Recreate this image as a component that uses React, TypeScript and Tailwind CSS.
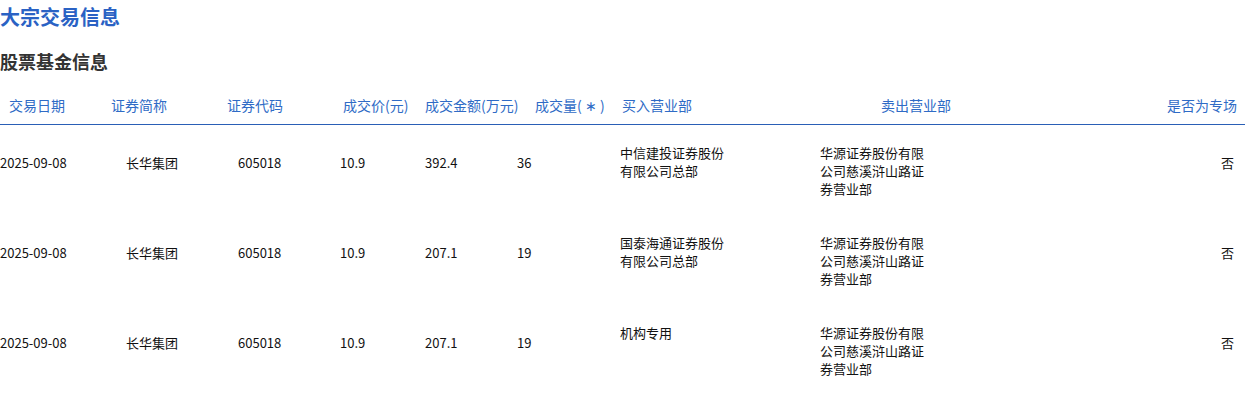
import React from "react";

const font = { fontFamily: '"Noto Sans CJK SC", "Noto Sans", sans-serif' };

type Row = { date: string; name: string; code: string; price: string; amount: string; vol: string; buy: string; sell: string; special: string };

const rows: Row[] = [
  { date: "2025-09-08", name: "长华集团", code: "605018", price: "10.9", amount: "392.4", vol: "36", buy: "中信建投证券股份有限公司总部", sell: "华源证券股份有限公司慈溪浒山路证券营业部", special: "否" },
  { date: "2025-09-08", name: "长华集团", code: "605018", price: "10.9", amount: "207.1", vol: "19", buy: "国泰海通证券股份有限公司总部", sell: "华源证券股份有限公司慈溪浒山路证券营业部", special: "否" },
  { date: "2025-09-08", name: "长华集团", code: "605018", price: "10.9", amount: "207.1", vol: "19", buy: "机构专用", sell: "华源证券股份有限公司慈溪浒山路证券营业部", special: "否" },
];

const cols = "grid grid-cols-[90px_110px_100px_120px_90px_105px_200px_200px_1fr]";

export default function App() {
  return (
    <div className="bg-white w-[1245px] h-[394px] overflow-hidden text-[#222]" style={font}>
      <h1 className="text-[20px] leading-[26px] font-bold text-[#2a62c4] pt-[4px]">大宗交易信息</h1>
      <h2 className="text-[18px] leading-[24px] font-bold text-[#333] mt-[19px]">股票基金信息</h2>
      <div className={`${cols} mt-[22px] h-[30px] border-b border-[#2a5fb6] text-[14px] leading-[20px] text-[#2f6bc6] items-start whitespace-nowrap`}>
        <div className="pl-[9px]">交易日期</div>
        <div className="pl-[21px]">证券简称</div>
        <div className="pl-[27px]">证券代码</div>
        <div className="pl-[43px]">成交价(元)</div>
        <div className="pl-[5px]">成交金额(万元)</div>
        <div className="pl-[25px]">成交量( ∗ )</div>
        <div className="pl-[7px]">买入营业部</div>
        <div className="pl-[66px]">卖出营业部</div>
        <div className="text-right pr-[8px]">是否为专场</div>
      </div>
      {rows.map((r, i) => (
        <div key={i} className={`${cols} h-[90px] text-[13px] leading-[18px] text-[#111]`}>
          <div className="pt-[29px]">{r.date}</div>
          <div className="pt-[29px] pl-[36px]">{r.name}</div>
          <div className="pt-[29px] pl-[38px]">{r.code}</div>
          <div className="pt-[29px] pl-[40px]">{r.price}</div>
          <div className="pt-[29px] pl-[5px]">{r.amount}</div>
          <div className="pt-[29px] pl-[7px]">{r.vol}</div>
          <div className="pt-[19px] pl-[5px]"><div className="w-[110px]">{r.buy}</div></div>
          <div className="pt-[19px] pl-[5px]"><div className="w-[110px]">{r.sell}</div></div>
          <div className="pt-[29px] text-right pr-[11px]">{r.special}</div>
        </div>
      ))}
    </div>
  );
}
